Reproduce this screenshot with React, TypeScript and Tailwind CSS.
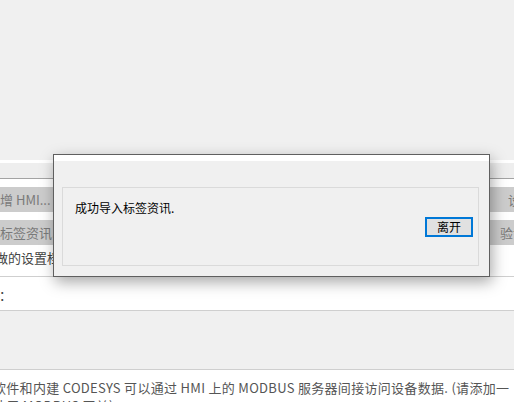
import React from 'react';

const cjk = { fontFamily: '"Noto Sans CJK SC", "Noto Sans", sans-serif' };

const App = () => {
  return (
    <div className="relative w-[514px] h-[402px] overflow-hidden bg-white text-[13px]" style={cjk}>
      {/* page behind the dialog */}
      <div className="h-[160px] bg-[#f0f0f0]" />
      <div className="h-[3px] bg-white" />
      <div className="h-[16px] bg-[#eeeeee] border-b border-[#a3a3a3]" />
      <div className="pt-[8px] flex flex-col gap-[8px]">
        <div className="flex h-[25px] leading-[25px]">
          <div className="w-[90px] bg-[#cccccc] text-[#7a7a7a] whitespace-nowrap">增 HMI...</div>
          <div className="ml-auto w-[40px] bg-[#cccccc] text-[#7a7a7a] pl-[34px] whitespace-nowrap overflow-hidden">设定</div>
        </div>
        <div className="flex h-[25px] leading-[25px]">
          <div className="w-[90px] bg-[#cccccc] text-[#7a7a7a] whitespace-nowrap">标签资讯...</div>
          <div className="ml-auto w-[40px] bg-[#cccccc] text-[#7a7a7a] pl-[26px] whitespace-nowrap overflow-hidden">验证</div>
        </div>
      </div>
      <div className="h-[32px] leading-[26px] text-[#444] whitespace-nowrap -ml-[5px] border-b border-[#cfcfcf]">做的设置档</div>
      <div className="h-[33px] pt-[10px] leading-[16px] text-[#444] -ml-[14px]">式：</div>
      <div className="h-[60px] bg-[#f0f0f0] border-y border-[#cfcfcf]" />
      <div className="pt-[9px] leading-[18px] text-[#555] whitespace-nowrap -ml-[7px] tracking-[0.3px]">
        <div>软件和内建 CODESYS 可以通过 HMI 上的 MODBUS 服务器间接访问设备数据. (请添加一</div>
        <div>使用 MODBUS 网关)</div>
      </div>

      {/* message dialog */}
      <div className="absolute left-[53px] top-[154px] w-[437px] h-[123px] border border-[#5f5f5f] bg-[#f0f0f0] shadow-[2px_5px_14px_rgba(0,0,0,0.35)]">
        <div className="h-[6px] bg-white" />
        <div className="ml-[8px] mt-[26px] w-[417px] h-[79px] border border-[#dadada] relative">
          <div className="pl-[12px] pt-[12px] text-[12px] leading-[16px] text-black">成功导入标签资讯.</div>
          <div className="flex justify-end pr-[5px] pt-[1px]">
            <button className="w-[48px] h-[20px] border-2 border-[#0078d7] bg-[#e1e1e1] text-[12px] leading-[14px] text-black">离开</button>
          </div>
        </div>
      </div>
    </div>
  );
};

export default App;
